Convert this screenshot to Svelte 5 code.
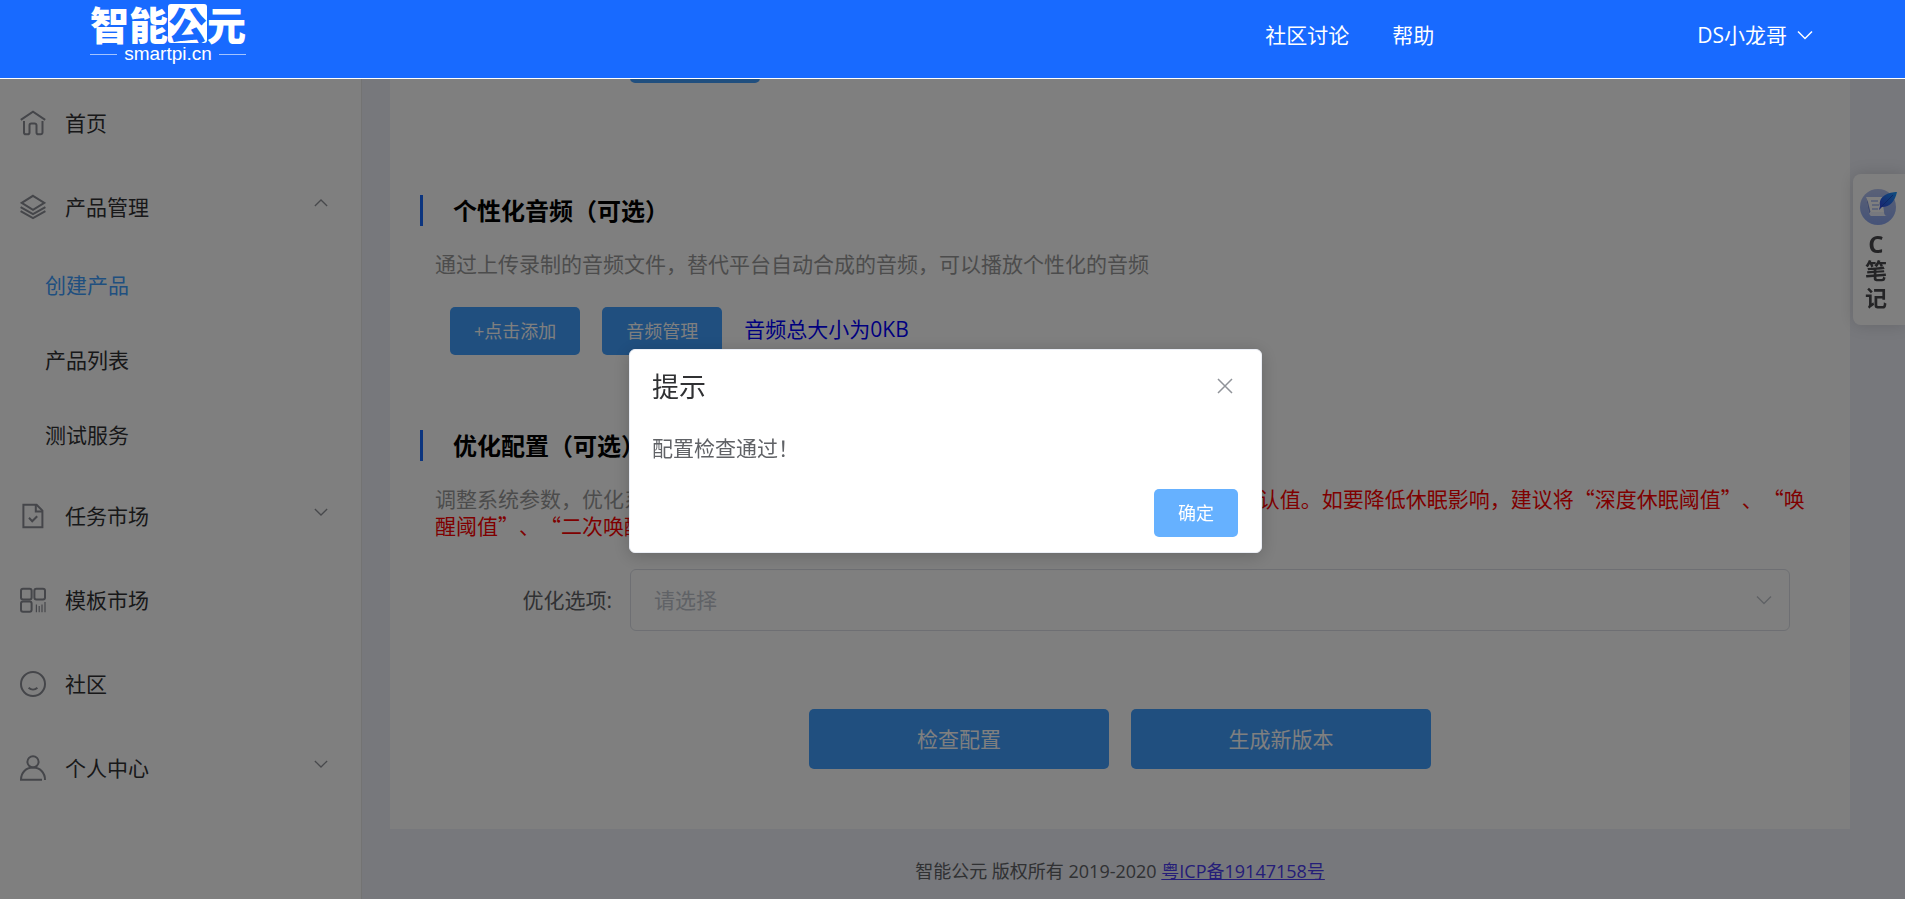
<script>
  const menu = [
    { label: '首页', icon: 'home' },
    {
      label: '产品管理',
      icon: 'layers',
      arrow: 'up',
      children: [
        { label: '创建产品', active: true },
        { label: '产品列表' },
        { label: '测试服务' }
      ]
    },
    { label: '任务市场', icon: 'task', arrow: 'down' },
    { label: '模板市场', icon: 'grid' },
    { label: '社区', icon: 'smile' },
    { label: '个人中心', icon: 'user', arrow: 'down' }
  ];
</script>

{#snippet icon(name)}
  <svg class="icon" viewBox="0 0 26 26" aria-hidden="true">
    {#if name === 'home'}
      <path d="M.8 9.8 13 1.6l12.2 8.2" />
      <path d="M4 11v11.4A1.8 1.8 0 0 0 5.8 24.2h1.900a1.800 1.800 0 0 0 1.800-1.800v-7.200a1.800 1.800 0 0 1 1.800-1.800h3.400a1.800 1.800 0 0 1 1.800 1.800v7.200a1.800 1.800 0 0 0 1.800 1.800h2.400a1.800 1.800 0 0 0 1.800-1.800V11" />
    {:else if name === 'layers'}
      <path d="M13 1.800 24.300 8.800 13 15.800 1.700 8.800z" />
      <path d="M.6 13.200 13 20.200l12.400-7M.6 17.200 13 24.200l12.400-7" />
    {:else if name === 'task'}
      <path d="M3.400 1.800h13.200l5.800 5.800v16.600h-19z" />
      <path d="M15.800 1.800v6.600h6.600M9 14.800l3.200 3.400 5-5" />
    {:else if name === 'grid'}
      <rect x="1" y="1.800" width="10.600" height="10.800" rx="2" />
      <rect x="14.400" y="1.800" width="10.600" height="10.800" rx="2" />
      <rect x="1" y="14.400" width="10.600" height="10.400" rx="2" />
      <path d="M16.400 17.400v7.800M19.200 19v6.200M22 17.400v7.800M25 15v10.200" stroke-width="1.200" />
    {:else if name === 'smile'}
      <circle cx="13" cy="13" r="12" />
      <path d="M8.600 16.800c2.600 2.400 6.200 2.400 8.800 0" />
    {:else if name === 'user'}
      <circle cx="13" cy="6.800" r="5.600" />
      <path d="M22 24.800H1C1 17.600 6 12.600 13 12.600s12 5 12 12.400" />
    {/if}
  </svg>
{/snippet}

{#snippet chevron(dir)}
  <svg class="chevron" viewBox="0 0 16 10" aria-hidden="true">
    <path d={dir === 'up' ? 'M1 8.500 8 1.500l7 7' : 'M1 1.500l7 7 7-7'} />
  </svg>
{/snippet}

<div class="page" lang="zh-CN">
  <header class="topbar">
    <a class="logo" href="#home">
      <span class="logo-name">智能<b>公</b>元</span>
      <span class="logo-domain">smartpi.cn</span>
    </a>
    <nav class="topnav">
      <a href="#forum">社区讨论</a>
      <a href="#help">帮助</a>
    </nav>
    <button class="account" type="button">DS小龙哥 {@render chevron('down')}</button>
  </header>

  <div class="layout">
    <nav class="sidebar">
      <ul>
        {#each menu as item}
          <li>
            <a class="item" href="#menu">
              {@render icon(item.icon)}
              <span>{item.label}</span>
              {#if item.arrow}{@render chevron(item.arrow)}{/if}
            </a>
            {#if item.children}
              <ul>
                {#each item.children as child}
                  <li><a class="subitem" class:active={child.active} href="#sub">{child.label}</a></li>
                {/each}
              </ul>
            {/if}
          </li>
        {/each}
      </ul>
    </nav>

    <div class="content">
      <main class="card">
        <div class="upload"><button class="btn" type="button">+点击添加</button></div>

        <section>
          <h2>个性化音频（可选）</h2>
          <p class="desc">通过上传录制的音频文件，替代平台自动合成的音频，可以播放个性化的音频</p>
          <div class="tools">
            <button class="btn" type="button">+点击添加</button>
            <button class="btn" type="button">音频管理</button>
            <span class="total">音频总大小为0KB</span>
          </div>
        </section>

        <section>
          <h2>优化配置（可选）</h2>
          <p class="desc">
            调整系统参数，优化系统的识别和唤醒效果。
            <span class="warn">若非特殊需要，请保持系统的各项参数为默认值。如要降低休眠影响，建议将“深度休眠阈值”、“唤醒阈值”、“二次唤醒阈值”适当调低。</span>
          </p>
          <div class="field">
            <label for="option">优化选项:</label>
            <div class="select">
              <select id="option">
                <option>请选择</option>
              </select>
              {@render chevron('down')}
            </div>
          </div>
        </section>

        <div class="actions">
          <button class="btn large" type="button">检查配置</button>
          <button class="btn large" type="button">生成新版本</button>
        </div>
      </main>
      <footer>智能公元 版权所有 2019-2020 <a href="#icp">粤ICP备19147158号</a></footer>
    </div>
  </div>

  <button class="notes" type="button">
    <svg viewBox="0 0 38 38" aria-hidden="true">
      <defs>
        <linearGradient id="disc" x1="0" y1="0" x2="0" y2="1">
          <stop offset="0" stop-color="#b4c2ee" />
          <stop offset="1" stop-color="#8ba6f0" />
        </linearGradient>
        <linearGradient id="quill" x1="1" y1="0" x2="0" y2="1">
          <stop offset="0" stop-color="#1c9cff" />
          <stop offset="1" stop-color="#3340e0" />
        </linearGradient>
      </defs>
      <circle cx="18" cy="19" r="18" fill="url(#disc)" />
      <path d="M6 9h16l2 15v4H12L9 25z" fill="#fff" />
      <path d="M6 9l2 5 3 12-2-1z" fill="#7d93dc" />
      <path d="M11 28a3 3 0 0 1-1-4h14c0 2 1 4 3 4z" fill="#eef2ff" />
      <path d="M11 13h7M12 17h7M12 21h6" stroke="#a9bcf2" stroke-width="1.500" />
      <path d="M37 4c-8 0-19 4-17 14l-1 4 3-3c8 0 13-6 15-15z" fill="url(#quill)" />
      <path d="M33 7 21 19" stroke="#1f4fc8" stroke-width="1" />
    </svg>
    <span class="letter">C</span><span>笔</span><span>记</span>
  </button>

  <div class="mask">
    <div class="dialog" role="dialog" aria-modal="true" aria-labelledby="dialog-title">
      <div class="dialog-head">
        <h1 id="dialog-title">提示</h1>
        <button class="close" type="button" aria-label="关闭">
          <svg viewBox="0 0 16 16"><path d="M1 1l14 14M15 1 1 15" /></svg>
        </button>
      </div>
      <p>配置检查通过！</p>
      <div class="dialog-foot"><button class="btn confirm" type="button">确定</button></div>
    </div>
  </div>
</div>

<style>
  :global(body) {
    margin: 0;
  }

  .page {
    display: flex;
    flex-direction: column;
    min-height: 100vh;
    background: #eef0f8;
    font-family: 'Open Sans', 'Noto Sans CJK SC', sans-serif;
    font-size: 21px;
    font-weight: 400;
    line-height: 27px;
    text-spacing-trim: space-all;
    color: #303133;
  }

  .page * {
    box-sizing: border-box;
  }

  button,
  select {
    font: inherit;
    color: inherit;
    border: 0;
    background: none;
    padding: 0;
    margin: 0;
  }

  a {
    color: inherit;
    text-decoration: none;
  }

  ul {
    list-style: none;
    margin: 0;
    padding: 0;
  }

  svg {
    fill: none;
    flex: none;
  }

  .topbar {
    position: relative;
    z-index: 20;
    display: flex;
    align-items: center;
    height: 79px;
    padding: 0 92px 0 90px;
    background: #186aff;
    border-bottom: 1px solid #fff;
    color: #fff;
  }

  .logo {
    display: flex;
    flex: none;
    flex-direction: column;
    align-self: flex-start;
    padding-top: 4px;
  }

  .logo-name {
    font-family: 'Noto Sans CJK SC', sans-serif;
    font-size: 39px;
    font-weight: 900;
    line-height: 39px;
    white-space: nowrap;
  }

  .logo-name b {
    display: inline-block;
    font-weight: 900;
    background: #fff;
    color: #186aff;
    border-radius: 3px;
  }

  .logo-domain {
    display: flex;
    align-items: center;
    justify-content: space-between;
    font-family: 'Liberation Sans', sans-serif;
    font-size: 19px;
    line-height: 22px;
  }

  .logo-domain::before,
  .logo-domain::after {
    content: '';
    width: 27px;
    height: 1px;
    background: #a3c3ff;
  }

  .topnav {
    display: flex;
    gap: 43px;
    margin-left: auto;
    padding-bottom: 8px;
  }

  .account {
    display: flex;
    align-items: center;
    gap: 10px;
    margin-left: 263px;
    padding-bottom: 8px;
  }

  .chevron {
    width: 16px;
    height: 10px;
    stroke: currentColor;
    stroke-width: 1.500;
  }

  .layout {
    display: flex;
    flex: 1;
  }

  .sidebar {
    flex: none;
    width: 362px;
    padding-top: 2px;
    background: #fff;
    border-right: 1px solid #e6e6e6;
  }

  .item {
    display: flex;
    align-items: center;
    height: 84px;
    padding: 0 33px 0 20px;
  }

  .item .icon {
    width: 26px;
    height: 26px;
    margin-right: 19px;
    stroke: #8a8c94;
    stroke-width: 2;
  }

  .item .chevron {
    width: 14px;
    height: 14px;
    margin-left: auto;
    margin-bottom: 8px;
    color: #909399;
  }

  .subitem {
    display: flex;
    align-items: center;
    height: 75px;
    padding-left: 45px;
    padding-bottom: 3px;
  }

  .active {
    color: #409eff;
  }

  .content {
    flex: 1;
    min-width: 0;
    padding: 0 55px 0 28px;
    display: flex;
    flex-direction: column;
  }

  .card {
    overflow: hidden;
    padding: 0 30px 60px;
    background: #fff;
  }

  .upload {
    margin-top: -44px;
    padding-left: 210px;
    height: 48px;
    display: flex;
  }

  .btn {
    height: 48px;
    padding: 0 24px;
    border-radius: 5px;
    background: #409eff;
    color: #fff;
    font-size: 18px;
    white-space: nowrap;
  }

  h2 {
    margin: 0;
    padding: 0 0 0 30px;
    border-left: 3px solid #186aff;
    font-size: 24px;
    font-weight: 700;
    line-height: 31px;
    color: #000;
  }

  .upload + section {
    margin-top: 112px;
  }

  section + section {
    margin-top: 75px;
  }

  .desc {
    margin: 24px 5px 0 15px;
    font-family: 'Noto Sans CJK SC', sans-serif;
    color: #999;
  }

  .warn {
    color: #f00;
  }

  .tools {
    display: flex;
    align-items: center;
    gap: 22px;
    margin: 30px 0 0 30px;
  }

  .total {
    padding-bottom: 4px;
    color: #00f;
  }

  .field {
    display: flex;
    align-items: center;
    margin: 30px 30px 0 0;
    color: #606266;
  }

  .field label {
    width: 210px;
    padding-right: 18px;
    text-align: right;
  }

  .select {
    position: relative;
    flex: 1;
    display: flex;
    align-items: center;
  }

  select {
    appearance: none;
    width: 100%;
    height: 62px;
    padding: 0 23px;
    border: 1px solid #dcdfe6;
    border-radius: 6px;
    color: #c0c4cc;
  }

  .select .chevron {
    position: absolute;
    right: 18px;
    color: #c0c4cc;
  }

  .actions {
    display: flex;
    justify-content: center;
    gap: 22px;
    margin-top: 78px;
  }

  .large {
    width: 300px;
    height: 60px;
    font-size: 21px;
  }

  footer {
    padding: 29px 0;
    text-align: center;
    font-size: 18px;
    color: #606266;
  }

  footer a {
    color: #4a3cf0;
    text-decoration: underline;
  }

  .notes {
    position: fixed;
    right: 0;
    top: 174px;
    display: flex;
    flex-direction: column;
    align-items: center;
    width: 52px;
    padding: 14px 6px 14px 0;
    border-radius: 8px 0 0 8px;
    background: #fff;
    box-shadow: 0 0 16px rgba(0, 0, 0, 0.15);
    font-weight: 700;
    font-size: 22px;
    line-height: 27px;
    color: #48484c;
  }

  .notes .letter {
    font-size: 24px;
  }

  .notes svg {
    width: 38px;
    height: 38px;
    margin: 0 0 4px 5px;
  }

  .mask {
    position: fixed;
    inset: 0;
    z-index: 10;
    display: flex;
    align-items: center;
    justify-content: center;
    padding: 3px 14px 0 0;
    background: rgba(0, 0, 0, 0.5);
  }

  .dialog {
    width: 633px;
    padding: 20px 23px 15px 22px;
    border: 1px solid #ebeef5;
    border-radius: 6px;
    background: #fff;
    box-shadow: 0 3px 18px rgba(0, 0, 0, 0.2);
  }

  .dialog-head {
    display: flex;
    align-items: center;
    justify-content: space-between;
  }

  h1 {
    margin: 0;
    font-size: 27px;
    font-weight: 400;
    line-height: 33px;
  }

  .close {
    display: flex;
    padding: 0 5px 2px;
    color: #909399;
  }

  .close svg {
    width: 16px;
    height: 16px;
    stroke: currentColor;
    stroke-width: 1.500;
  }

  .dialog p {
    margin: 32px 0 0;
    color: #606266;
  }

  .dialog-foot {
    display: flex;
    justify-content: flex-end;
    margin-top: 27px;
  }

  .confirm {
    background: #66b1ff;
  }
</style>
